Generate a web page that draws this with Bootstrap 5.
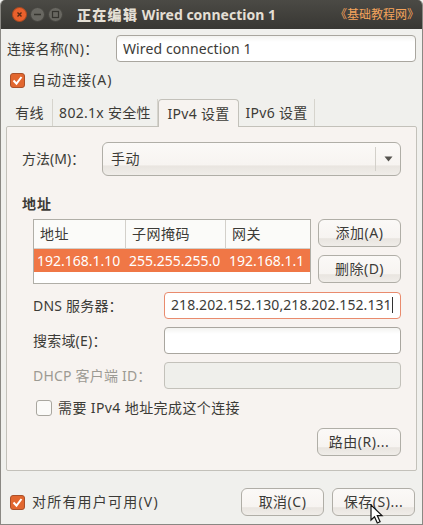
<!DOCTYPE html>
<html lang="zh-CN">
<head>
<meta charset="UTF-8">
<meta name="viewport" content="width=device-width, initial-scale=1.0">
<title>正在编辑 Wired connection 1</title>
<link href="https://cdn.jsdelivr.net/npm/bootstrap@5.3.0/dist/css/bootstrap.min.css" rel="stylesheet">
<style>
html, body { margin: 0; padding: 0; background: #f1f1ee; }
body { font-family: "Noto Sans", "Noto Sans CJK SC", sans-serif; font-size: 14px; color: #3c3b37; line-height: 20px; }
.win { width: 423px; height: 525px; position: relative; overflow: hidden; background: #f0f0ed; border: 1px solid #8a8883; border-top: 0; border-radius: 5px 5px 0 0; }
.titlebar { height: 29px; background: linear-gradient(#4b4a45, #383733); margin: 0 -1px; padding: 0 4px 0 12px; color: #e4dfd4; }
.wbtn { width: 15px; height: 15px; flex: none; border-radius: 50%; background: #686761; border: 1px solid #45443f; margin-right: 3px; }
.wbtn svg { display: block; }
.wbtn-close { background: #e9602c; border-color: #a8481f; }
.wtitle { font-weight: 700; margin-left: 11px; }
.wtitle b { letter-spacing: 1.3px; }
.wmark { color: #f5a45c; font-size: 12px; margin-left: auto; }
.content { padding: 6px 6px 0 5px; }
.name-row { padding-left: 1px; }
.name-label { width: 109px; letter-spacing: .3px; }
.gtk-input { display: block; height: 27px; padding: 2px 6px; border: 1px solid #a9a69f; border-radius: 4px; background: linear-gradient(#f3f3f0 0, #fff 6px); color: #3c3b37; font-size: 14px; line-height: 20px; box-shadow: none; }
.gtk-input:disabled { background: #efefeb; border-color: #c3c1ba; }
.input-name { width: 300px; letter-spacing: .1px; }
.input-wide { width: 237px; }
.input-focus { border-color: #e98b6d; background: #fff; white-space: nowrap; overflow: hidden; padding-right: 0; letter-spacing: .07px; }
.caret-mark { display: inline-block; width: 1px; height: 16px; background: #333; vertical-align: -3px; }
.chk { width: 15px; height: 15px; border-radius: 3px; flex: none; margin-right: 7px; display: block; }
.chk-on { background: #e2672f; border: 1px solid #a9502a; }
.chk-off { background: #fbfaf8; border: 1px solid #a9a69f; width: 16px; height: 16px; margin-right: 6px; }
.chk svg { display: block; }
.auto-row { margin-top: 10px; margin-left: 4px; height: 16px; letter-spacing: 1px; }
.tab-strip { margin: 11px 0 0 0; padding-left: 0; border: 0; height: 27px; position: relative; z-index: 2; letter-spacing: .3px; }
.tab-strip .tab-item { height: 27px; padding: 4px 0 0; text-align: center; border-right: 1px solid #d6d4cd; color: #3c3b37; }
.tab-a { width: 46px; margin-left: 1px; }
.tab-b { width: 105px; }
.tab-strip .tab-c { width: 81px; height: 28px; background: #f7f3f0; border: 1px solid #c3c1ba; border-bottom: 0; border-radius: 4px 4px 0 0; }
.tab-d { width: 76px; }
.panel-box { height: 345px; width: 411px; background: #f7f3f0; border: 1px solid #c3c1ba; border-radius: 2px; padding: 15px 15px 0 15px; }
.gtk-btn { display: block; height: 28px; padding: 0; border: 1px solid #b0aea7; border-radius: 6px; background: linear-gradient(#fbf9f7 0, #f7f4f1 68%, #e9e5e0 72%, #f0ede9 100%); color: #3c3b37; font-size: 14px; line-height: 26px; text-align: center; letter-spacing: .5px; }
.combo { width: 299px; height: 34px; margin-left: 0; padding: 0 0 0 8px; text-align: left; line-height: 32px; }
.combo-sep { width: 1px; height: 24px; background: #d3d0ca; margin-left: auto; }
.combo-arrow { width: 24px; }
.combo-label { width: 80px; }
.sec-title { font-weight: 700; margin-top: 18px; height: 20px; letter-spacing: 1px; }
.addr-row { margin-top: 5px; padding-left: 11px; }
.addr-list { width: 278px; height: 65px; background: #fff; border: 1px solid #b0aea7; margin: 0; flex: none; }
.addr-head { height: 29px; background: #fbfbf9; border-bottom: 1px solid #d3d0ca; letter-spacing: .5px; }
.addr-head > div { padding: 4px 0 0 6px; border-right: 1px solid #d3d0ca; height: 28px; }
.addr-head > div:last-child { border-right: 0; }
.col-one { width: 92px; flex: none; }
.col-two { width: 100px; flex: none; }
.addr-sel { height: 23px; background: #f07746; color: #fff; line-height: 23px; white-space: nowrap; }
.addr-sel span { display: block; padding-left: 3px; }
.addr-side { margin-left: 7px; width: 83px; gap: 8px; }
.field-row { padding-left: 11px; height: 27px; margin-top: 8px; }
.field-row .field-label { width: 131px; letter-spacing: .2px; }
.field-first { margin-top: 8px; }
.muted-label { color: #9c9a93; }
.need-row { margin-left: 14px; margin-top: 11px; height: 16px; letter-spacing: .4px; }
.route-row { margin-top: 12px; padding-right: 0; }
.route-btn { width: 84px; }
.foot { height: 28px; margin-top: 17px; padding: 0 1px 0 4px; }
.foot-text { letter-spacing: 1.2px; }
.foot-btn { width: 83px; margin-left: 8px; }
.mouse-ptr { position: absolute; left: 369px; top: 504px; }
</style>
</head>
<body>
<div class="win">
  <div class="titlebar d-flex align-items-center">
    <span class="wbtn wbtn-close"><svg width="13" height="13" viewBox="0 0 13 13"><path d="M4.5 4.5l4 4M8.5 4.5l-4 4" stroke="#5a2a14" stroke-width="1.4"/></svg></span>
    <span class="wbtn"><svg width="13" height="13" viewBox="0 0 13 13"><path d="M3 6.5h7" stroke="#35342f" stroke-width="1.6"/></svg></span>
    <span class="wbtn"><svg width="13" height="13" viewBox="0 0 13 13"><rect x="3.5" y="3.5" width="6" height="6" fill="none" stroke="#35342f" stroke-width="1.2"/></svg></span>
    <span class="wtitle"><b>正在编辑</b> Wired connection 1</span>
    <span class="wmark">《基础教程网》</span>
  </div>

  <div class="content">
    <div class="name-row d-flex align-items-center">
      <label class="name-label">连接名称(N)：</label>
      <input class="gtk-input input-name" type="text" value="Wired connection 1">
    </div>

    <div class="auto-row d-flex align-items-center">
      <span class="chk chk-on"><svg width="13" height="13" viewBox="0 0 13 13"><path d="M2.5 6.5l3 3.2 5-6.7" fill="none" stroke="#fff" stroke-width="2"/></svg></span>
      <span>自动连接(A)</span>
    </div>

    <div class="tab-strip d-flex">
      <div class="tab-item tab-a">有线</div>
      <div class="tab-item tab-b">802.1x 安全性</div>
      <div class="tab-item tab-c">IPv4 设置</div>
      <div class="tab-item tab-d">IPv6 设置</div>
    </div>

    <div class="panel-box">
      <div class="d-flex align-items-center">
        <label class="combo-label">方法(M)：</label>
        <div class="gtk-btn combo d-flex align-items-center">
          <span>手动</span>
          <span class="combo-sep"></span>
          <span class="combo-arrow d-flex justify-content-center"><svg width="9" height="6" viewBox="0 0 9 6"><path d="M0.5 0.5h8l-4 5z" fill="#55534e"/></svg></span>
        </div>
      </div>

      <div class="sec-title">地址</div>

      <div class="addr-row d-flex">
        <div class="addr-list">
          <div class="addr-head d-flex">
            <div class="col-one">地址</div>
            <div class="col-two">子网掩码</div>
            <div class="flex-grow-1">网关</div>
          </div>
          <div class="addr-sel d-flex">
            <span class="col-one">192.168.1.10</span>
            <span class="col-two">255.255.255.0</span>
            <span class="flex-grow-1">192.168.1.1</span>
          </div>
        </div>
        <div class="addr-side d-flex flex-column">
          <button class="gtk-btn w-100" type="button">添加(A)</button>
          <button class="gtk-btn w-100" type="button">删除(D)</button>
        </div>
      </div>

      <div class="field-row field-first d-flex align-items-center">
        <label class="field-label">DNS 服务器：</label>
        <div class="gtk-input input-wide input-focus">218.202.152.130,218.202.152.131<span class="caret-mark"></span></div>
      </div>
      <div class="field-row d-flex align-items-center">
        <label class="field-label">搜索域(E)：</label>
        <input class="gtk-input input-wide" type="text">
      </div>
      <div class="field-row d-flex align-items-center">
        <label class="field-label muted-label">DHCP 客户端 ID：</label>
        <input class="gtk-input input-wide" type="text" disabled>
      </div>

      <div class="need-row d-flex align-items-center">
        <span class="chk chk-off"></span>
        <span>需要 IPv4 地址完成这个连接</span>
      </div>

      <div class="route-row d-flex justify-content-end">
        <button class="gtk-btn route-btn" type="button">路由(R)...</button>
      </div>
    </div>

    <div class="foot d-flex align-items-center">
      <span class="chk chk-on"><svg width="13" height="13" viewBox="0 0 13 13"><path d="M2.5 6.5l3 3.2 5-6.7" fill="none" stroke="#fff" stroke-width="2"/></svg></span>
      <span class="foot-text">对所有用户可用(V)</span>
      <button class="gtk-btn foot-btn ms-auto" type="button">取消(C)</button>
      <button class="gtk-btn foot-btn" type="button">保存(S)...</button>
    </div>
  </div>

  <svg class="mouse-ptr" width="14" height="21" viewBox="0 0 14 21"><path d="M1 1v15l3.5-3.3 2.8 6.3 2.8-1.2-2.8-6.2h4.7z" fill="#fff" stroke="#111" stroke-width="1.2"/></svg>
</div>
</body>
</html>
